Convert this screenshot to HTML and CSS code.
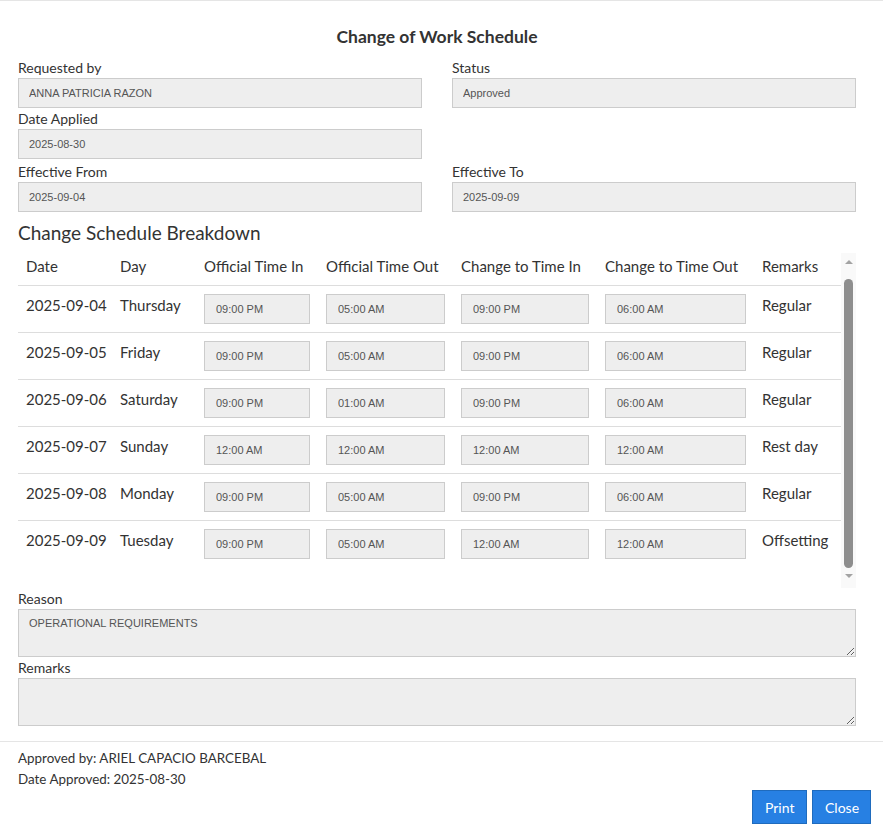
FILE: index.html
```html
<!DOCTYPE html>
<html lang="en">
<head>
<meta charset="utf-8">
<title>Change of Work Schedule</title>
<link rel="stylesheet" href="styles.css">
</head>
<body>
<div class="modal">
  <div class="modal-top"></div>
  <div class="modal-body">
    <h4 class="title">Change of Work Schedule</h4>
    <div class="grid">
      <div class="field"><label class="lbl">Requested by</label><input class="ctl" value="ANNA PATRICIA RAZON" readonly></div>
      <div class="field"><label class="lbl">Status</label><input class="ctl" value="Approved" readonly></div>
      <div class="field"><label class="lbl">Date Applied</label><input class="ctl" value="2025-08-30" readonly></div>
      <div class="field"></div>
    </div>
    <div class="grid grid-second">
      <div class="field"><label class="lbl">Effective From</label><input class="ctl" value="2025-09-04" readonly></div>
      <div class="field"><label class="lbl">Effective To</label><input class="ctl" value="2025-09-09" readonly></div>
    </div>
    <h3 class="section">Change Schedule Breakdown</h3>
    <div class="scrollbox">
      <table class="sched">
        <colgroup>
          <col class="c-date"><col class="c-day"><col class="c-oti"><col class="c-oto"><col class="c-cti"><col class="c-cto"><col class="c-rem">
        </colgroup>
        <thead>
          <tr><th>Date</th><th>Day</th><th>Official Time In</th><th>Official Time Out</th><th>Change to Time In</th><th>Change to Time Out</th><th>Remarks</th></tr>
        </thead>
        <tbody>
          <tr><td>2025-09-04</td><td>Thursday</td><td><input class="tctl" value="09:00 PM" readonly></td><td><input class="tctl" value="05:00 AM" readonly></td><td><input class="tctl" value="09:00 PM" readonly></td><td><input class="tctl" value="06:00 AM" readonly></td><td>Regular</td></tr>
          <tr><td>2025-09-05</td><td>Friday</td><td><input class="tctl" value="09:00 PM" readonly></td><td><input class="tctl" value="05:00 AM" readonly></td><td><input class="tctl" value="09:00 PM" readonly></td><td><input class="tctl" value="06:00 AM" readonly></td><td>Regular</td></tr>
          <tr><td>2025-09-06</td><td>Saturday</td><td><input class="tctl" value="09:00 PM" readonly></td><td><input class="tctl" value="01:00 AM" readonly></td><td><input class="tctl" value="09:00 PM" readonly></td><td><input class="tctl" value="06:00 AM" readonly></td><td>Regular</td></tr>
          <tr><td>2025-09-07</td><td>Sunday</td><td><input class="tctl" value="12:00 AM" readonly></td><td><input class="tctl" value="12:00 AM" readonly></td><td><input class="tctl" value="12:00 AM" readonly></td><td><input class="tctl" value="12:00 AM" readonly></td><td>Rest day</td></tr>
          <tr><td>2025-09-08</td><td>Monday</td><td><input class="tctl" value="09:00 PM" readonly></td><td><input class="tctl" value="05:00 AM" readonly></td><td><input class="tctl" value="09:00 PM" readonly></td><td><input class="tctl" value="06:00 AM" readonly></td><td>Regular</td></tr>
          <tr><td>2025-09-09</td><td>Tuesday</td><td><input class="tctl" value="09:00 PM" readonly></td><td><input class="tctl" value="05:00 AM" readonly></td><td><input class="tctl" value="12:00 AM" readonly></td><td><input class="tctl" value="12:00 AM" readonly></td><td>Offsetting</td></tr>
        </tbody>
      </table>
      <div class="vscroll">
        <span class="arrow arrow-up"></span>
        <div class="thumb"></div>
        <span class="arrow arrow-down"></span>
      </div>
    </div>
    <div class="field-wide"><label class="lbl">Reason</label><textarea class="area" readonly>OPERATIONAL REQUIREMENTS</textarea></div>
    <div class="field-wide"><label class="lbl">Remarks</label><textarea class="area" readonly></textarea></div>
  </div>
  <div class="modal-footer">
    <div class="approved">
      <div>Approved by: ARIEL CAPACIO BARCEBAL</div>
      <div>Date Approved: 2025-08-30</div>
    </div>
    <div class="btns">
      <button class="btn btn-print">Print</button>
      <button class="btn btn-close">Close</button>
    </div>
  </div>
</div>
</body>
</html>
```

FILE: styles.css
```css
* { box-sizing: border-box; }
html, body { margin: 0; padding: 0; background: #fff; }
body {
  font-family: Lato, "Noto Sans", sans-serif;
  color: #333;
  font-size: 14px;
  width: 883px;
  height: 834px;
  overflow: hidden;
}
.modal { width: 883px; }
.modal-top { height: 1px; border-bottom: 1px solid #e5e5e5; }
.modal-body { padding: 0 27px 15px 18px; }
.title {
  margin: 25px 0 9px;
  font-size: 17.5px;
  line-height: 22px;
  font-weight: 700;
  text-align: center;
  color: #333;
}
.grid {
  display: grid;
  grid-template-columns: 1fr 1fr;
  column-gap: 30px;
}
.grid-second { margin-top: 2px; }
.field { display: flex; flex-direction: column; }
.lbl {
  display: block;
  font-size: 14px;
  line-height: 21px;
  height: 21px;
  color: #333;
}
.ctl {
  display: block;
  width: 100%;
  height: 30px;
  margin: 0;
  padding: 0 10px;
  border: 1px solid #ccc;
  background: #eee;
  color: #555;
  font-family: "Liberation Sans", Arial, sans-serif;
  font-size: 11px;
  outline: none;
}
.section {
  margin: 9px 0 8px;
  font-size: 19px;
  line-height: 24px;
  font-weight: 400;
  color: #333;
}
.scrollbox {
  display: flex;
  height: 335px;
  overflow: hidden;
}
.sched {
  width: 823px;
  table-layout: fixed;
  border-collapse: collapse;
  align-self: flex-start;
  font-size: 15px;
}
.c-date { width: 94px; }
.c-day { width: 84px; }
.c-oti { width: 122px; }
.c-oto { width: 135px; }
.c-cti { width: 144px; }
.c-cto { width: 157px; }
.c-rem { width: 87px; }
.sched th {
  text-align: left;
  font-weight: 400;
  padding: 3px 8px 8px;
  line-height: 21px;
  white-space: nowrap;
  border-bottom: 1px solid #ddd;
  color: #333;
}
.sched td {
  padding: 9px 8px 7px;
  line-height: 21px;
  vertical-align: top;
  border-top: 1px solid #ddd;
  white-space: nowrap;
  color: #333;
}
.sched td:nth-child(n+3):nth-child(-n+6) { padding: 8px; }
.sched tbody tr:first-child td { border-top: none; }
.tctl {
  display: block;
  width: 100%;
  height: 30px;
  margin: 0;
  padding: 0 11px;
  border: 1px solid #ccc;
  background: #eee;
  color: #555;
  font-family: "Liberation Sans", Arial, sans-serif;
  font-size: 11px;
  outline: none;
}
.vscroll {
  width: 15px;
  flex: none;
  background: #f9f9f9;
  display: flex;
  flex-direction: column;
  align-items: center;
}
.arrow {
  width: 0;
  height: 0;
  border-left: 4px solid transparent;
  border-right: 4px solid transparent;
}
.arrow-up { margin-top: 7px; border-bottom: 4px solid #a3a3a3; }
.arrow-down { margin-top: 6px; border-top: 4px solid #a3a3a3; }
.thumb {
  margin-top: 15px;
  width: 9px;
  height: 289px;
  background: #8e8e8e;
  border-radius: 5px;
}
.field-wide { display: block; }
.area {
  display: block;
  width: 100%;
  height: 48px;
  margin: 0;
  padding: 6px 10px;
  border: 1px solid #ccc;
  background: #eee;
  color: #555;
  font-family: "Liberation Sans", Arial, sans-serif;
  font-size: 11px;
  line-height: 15px;
  resize: vertical;
  outline: none;
}
.modal-footer {
  border-top: 1px solid #e5e5e5;
  padding: 6px 12px 0 18px;
}
.approved { font-size: 13.4px; line-height: 21px; color: #333; }
.btns {
  display: flex;
  justify-content: flex-end;
  gap: 5px;
}
.btn {
  height: 34px;
  margin: 0;
  padding: 0 12px;
  border: 1px solid #1f6bbd;
  border-radius: 0;
  background: #2780e3;
  color: #fff;
  font-family: Lato, "Noto Sans", sans-serif;
  font-size: 14px;
}
.btn-print { width: 55px; }
.btn-close { width: 59px; }
```
